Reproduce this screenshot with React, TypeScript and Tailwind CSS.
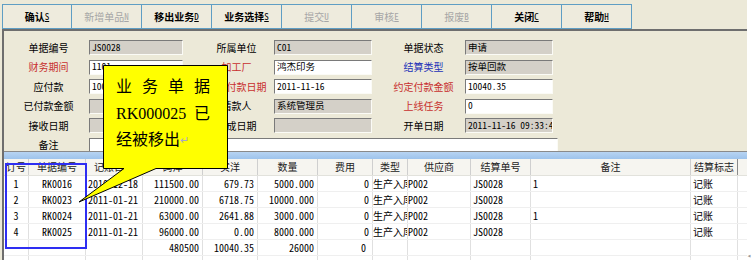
import React from "react";

const FONT = "'Noto Sans Mono CJK SC', 'Noto Sans CJK SC', 'Liberation Mono', monospace";

const buttons: { t: string; k: string; on: boolean }[] = [
  { t: "确认", k: "S", on: true },
  { t: "新增单品", k: "N", on: false },
  { t: "移出业务", k: "D", on: true },
  { t: "业务选择", k: "S", on: true },
  { t: "提交", k: "U", on: false },
  { t: "审核", k: "E", on: false },
  { t: "报废", k: "B", on: false },
  { t: "关闭", k: "C", on: true },
  { t: "帮助", k: "H", on: true },
];

function Field({ v, w, white }: { v?: string; w: string; white?: boolean }) {
  return (
    <div
      className={`${w} h-[15px] border-t border-l border-t-[#7a7a7a] border-l-[#7a7a7a] border-b border-r border-b-[#fbfbf6] border-r-[#fbfbf6] ${
        white ? "bg-white" : "bg-[#D4D0C8]"
      } flex items-center pl-[2px] text-[9.5px] leading-none text-black whitespace-nowrap overflow-hidden`}
    >
      {v}
    </div>
  );
}

function L({ t, c, w, pl }: { t: string; c?: string; w: string; pl: string }) {
  return (
    <div className={`${w} ${pl} text-center text-[10px] leading-none whitespace-nowrap ${c ?? "text-black"}`}>{t}</div>
  );
}

const RED = "text-[#C8302E]";
const BLUE = "text-[#2231B8]";

const cols = "grid grid-cols-[25px_57px_57px_60px_55px_60px_55px_35px_63px_60px_160px_47px]";

const rows = [
  ["1", "RK0016", "2010-12-18", "111500.00", "679.73", "5000.000", "0", "生产入库", "P002", "JS0028", "1", "记账"],
  ["2", "RK0023", "2011-01-21", "210000.00", "6718.75", "10000.000", "0", "生产入库", "P002", "JS0028", "", "记账"],
  ["3", "RK0024", "2011-01-21", "63000.00", "2641.88", "3000.000", "0", "生产入库", "P002", "JS0028", "1", "记账"],
  ["4", "RK0025", "2011-01-21", "96000.00", "0.00", "8000.000", "0", "生产入库", "P002", "JS0028", "", "记账"],
  ["", "", "", "480500", "10040.35", "26000", "0 ", "", "", "", "", ""],
  ["", "", "", "", "", "", "", "", "", "", "", ""],
];

const align = ["center", "center", "left", "right", "right", "right", "right", "left", "left", "left", "left", "left"];

const headers = ["订号", "单据编号", "记账日期", "码洋", "实洋", "数量", "费用", "类型", "供应商", "结算单号", "备注", "结算标志"];

export default function App() {
  return (
    <div className="relative w-[752px] h-[260px] bg-white overflow-hidden" style={{ fontFamily: FONT }}>
      <div className="w-[747px] h-[260px] bg-[#ECE9D8] flex flex-col">
        {/* toolbar */}
        <div className="h-[30px] flex items-start pt-[4px] pl-[2px]">
          {buttons.map((b, i) => (
            <div
              key={i}
              className={`w-[70px] h-[25px] border border-[#5F9EC4] ${i > 0 ? "border-l-0" : ""} bg-[#EEEBDD] flex items-center justify-center text-[10px] leading-none ${
                b.on ? "text-black font-bold" : "text-[#A6A6A6]"
              }`}
            >
              <span>{b.t}</span>
              <span className="underline text-[9px] font-normal">{b.k}</span>
            </div>
          ))}
        </div>
        {/* lower section */}
        <div className="ml-[2px] flex-1 flex flex-col border-l-2 border-t-2 border-[#6e6e6e]">
          {/* form */}
          <div className="h-[120px] overflow-hidden flex flex-col gap-[4.5px] pt-[9px]">
            <div className="flex items-center">
              <L t="单据编号" w="w-[85px]" pl="pl-[4px]" />
              <Field v="JS0028" w="w-[94px]" />
              <L t="所属单位" w="w-[91px]" pl="pl-[16px]" />
              <Field v="C01" w="w-[98px]" />
              <L t="单据状态" w="w-[93px]" pl="pl-[10px]" />
              <Field v="申请" w="w-[88px]" />
            </div>
            <div className="flex items-center">
              <L t="财务期间" c={RED} w="w-[85px]" pl="pl-[4px]" />
              <Field v="1101" w="w-[94px]" white />
              <L t="加工厂" c={RED} w="w-[91px]" pl="pl-[16px]" />
              <Field v="鸿杰印务" w="w-[98px]" white />
              <L t="结算类型" c={BLUE} w="w-[93px]" pl="pl-[10px]" />
              <Field v="按单回款" w="w-[88px]" />
            </div>
            <div className="flex items-center">
              <L t="应付款" w="w-[85px]" pl="pl-[4px]" />
              <Field v="10040.35" w="w-[94px]" white />
              <L t="约定付款日期" c={RED} w="w-[91px]" pl="pl-[16px]" />
              <Field v="2011-11-16" w="w-[98px]" white />
              <L t="约定付款金额" c={RED} w="w-[93px]" pl="pl-[10px]" />
              <Field v="10040.35" w="w-[88px]" white />
            </div>
            <div className="flex items-center">
              <L t="已付款金额" w="w-[85px]" pl="pl-[4px]" />
              <Field w="w-[94px]" />
              <L t="请款人" w="w-[91px]" pl="pl-[16px]" />
              <Field v="系统管理员" w="w-[98px]" />
              <L t="上线任务" c={RED} w="w-[93px]" pl="pl-[10px]" />
              <Field v="0" w="w-[88px]" white />
            </div>
            <div className="flex items-center">
              <L t="接收日期" w="w-[85px]" pl="pl-[4px]" />
              <Field w="w-[94px]" />
              <L t="完成日期" w="w-[91px]" pl="pl-[16px]" />
              <Field w="w-[98px]" />
              <L t="开单日期" w="w-[93px]" pl="pl-[10px]" />
              <Field v="2011-11-16 09:33:4" w="w-[88px]" />
            </div>
            <div className="flex items-center">
              <L t="备注" w="w-[85px]" pl="pl-[4px]" />
              <Field w="w-[469px]" white />
            </div>
          </div>
          {/* blue band */}
          <div className="h-[8px] border-t border-[#8a8a8a] bg-gradient-to-b from-[#B7D4F2] to-[#9EC3EC]" />
          {/* grid */}
          <div className="flex-1 bg-white overflow-hidden">
            <div className={`${cols} h-[17px] bg-[#F6F5F0] border-b border-[#E2E2DC]`}>
              {headers.map((h, i) => (
                <div
                  key={i}
                  className={`flex items-center justify-center text-[10px] leading-none text-[#222] border-r ${
                    i === 11 ? "border-[#8a8a8a]" : "border-[#CFCFCF]"
                  } overflow-hidden whitespace-nowrap`}
                >
                  {h}
                </div>
              ))}
            </div>
            {rows.map((r, ri) => (
              <div key={ri} className={`${cols} h-[16px] border-b border-[#EFEFEF]`}>
                {r.map((c, ci) => (
                  <div
                    key={ci}
                    className={`flex items-center text-[10px] leading-none text-black border-r border-[#E0E0E0] overflow-hidden whitespace-nowrap ${
                      align[ci] === "center"
                        ? "justify-center"
                        : align[ci] === "right"
                        ? "justify-end pr-[3px]"
                        : ci === 7 || ci === 8
                        ? "justify-start"
                        : "justify-start pl-[2px]"
                    } ${ci === 6 && ri === 4 ? "pr-[6px]" : ""} ${ci === 6 ? "pr-[1px]" : ""}`}
                  >
                    {c}
                  </div>
                ))}
              </div>
            ))}
          </div>
        </div>
      </div>

      {/* blue highlight rectangle */}
      <div className="absolute left-[5px] top-[163px] w-[82px] h-[86px] border-2 border-[#2E2EF2]" />

      {/* callout */}
      <svg className="absolute left-0 top-0 pointer-events-none" width="752" height="260">
        <path
          d="M103.5 65.5 H227.5 V168.5 H156 L79 202 L124 168.5 H103.5 Z"
          fill="#FFFF00"
          stroke="#000"
          strokeWidth="1"
        />
      </svg>
      <div
        className="absolute left-[116px] top-[74px] w-[94px] text-[16px] leading-[26.5px] text-black"
        style={{ fontFamily: "'Liberation Serif', 'Noto Sans CJK SC', serif" }}
      >
        <div className="flex justify-between">
          <span>业</span>
          <span>务</span>
          <span>单</span>
          <span>据</span>
        </div>
        <div className="flex justify-between">
          <span>RK000025</span>
          <span>已</span>
        </div>
        <div className="flex items-center">
          <span>经被移出</span>
          <span className="text-[11px] text-[#A7A7C4]">↵</span>
        </div>
      </div>

      {/* small scroll marker */}
      <div className="absolute left-[747px] top-[252px] text-[7px] leading-none text-[#9a9a9a]">◂</div>
    </div>
  );
}
